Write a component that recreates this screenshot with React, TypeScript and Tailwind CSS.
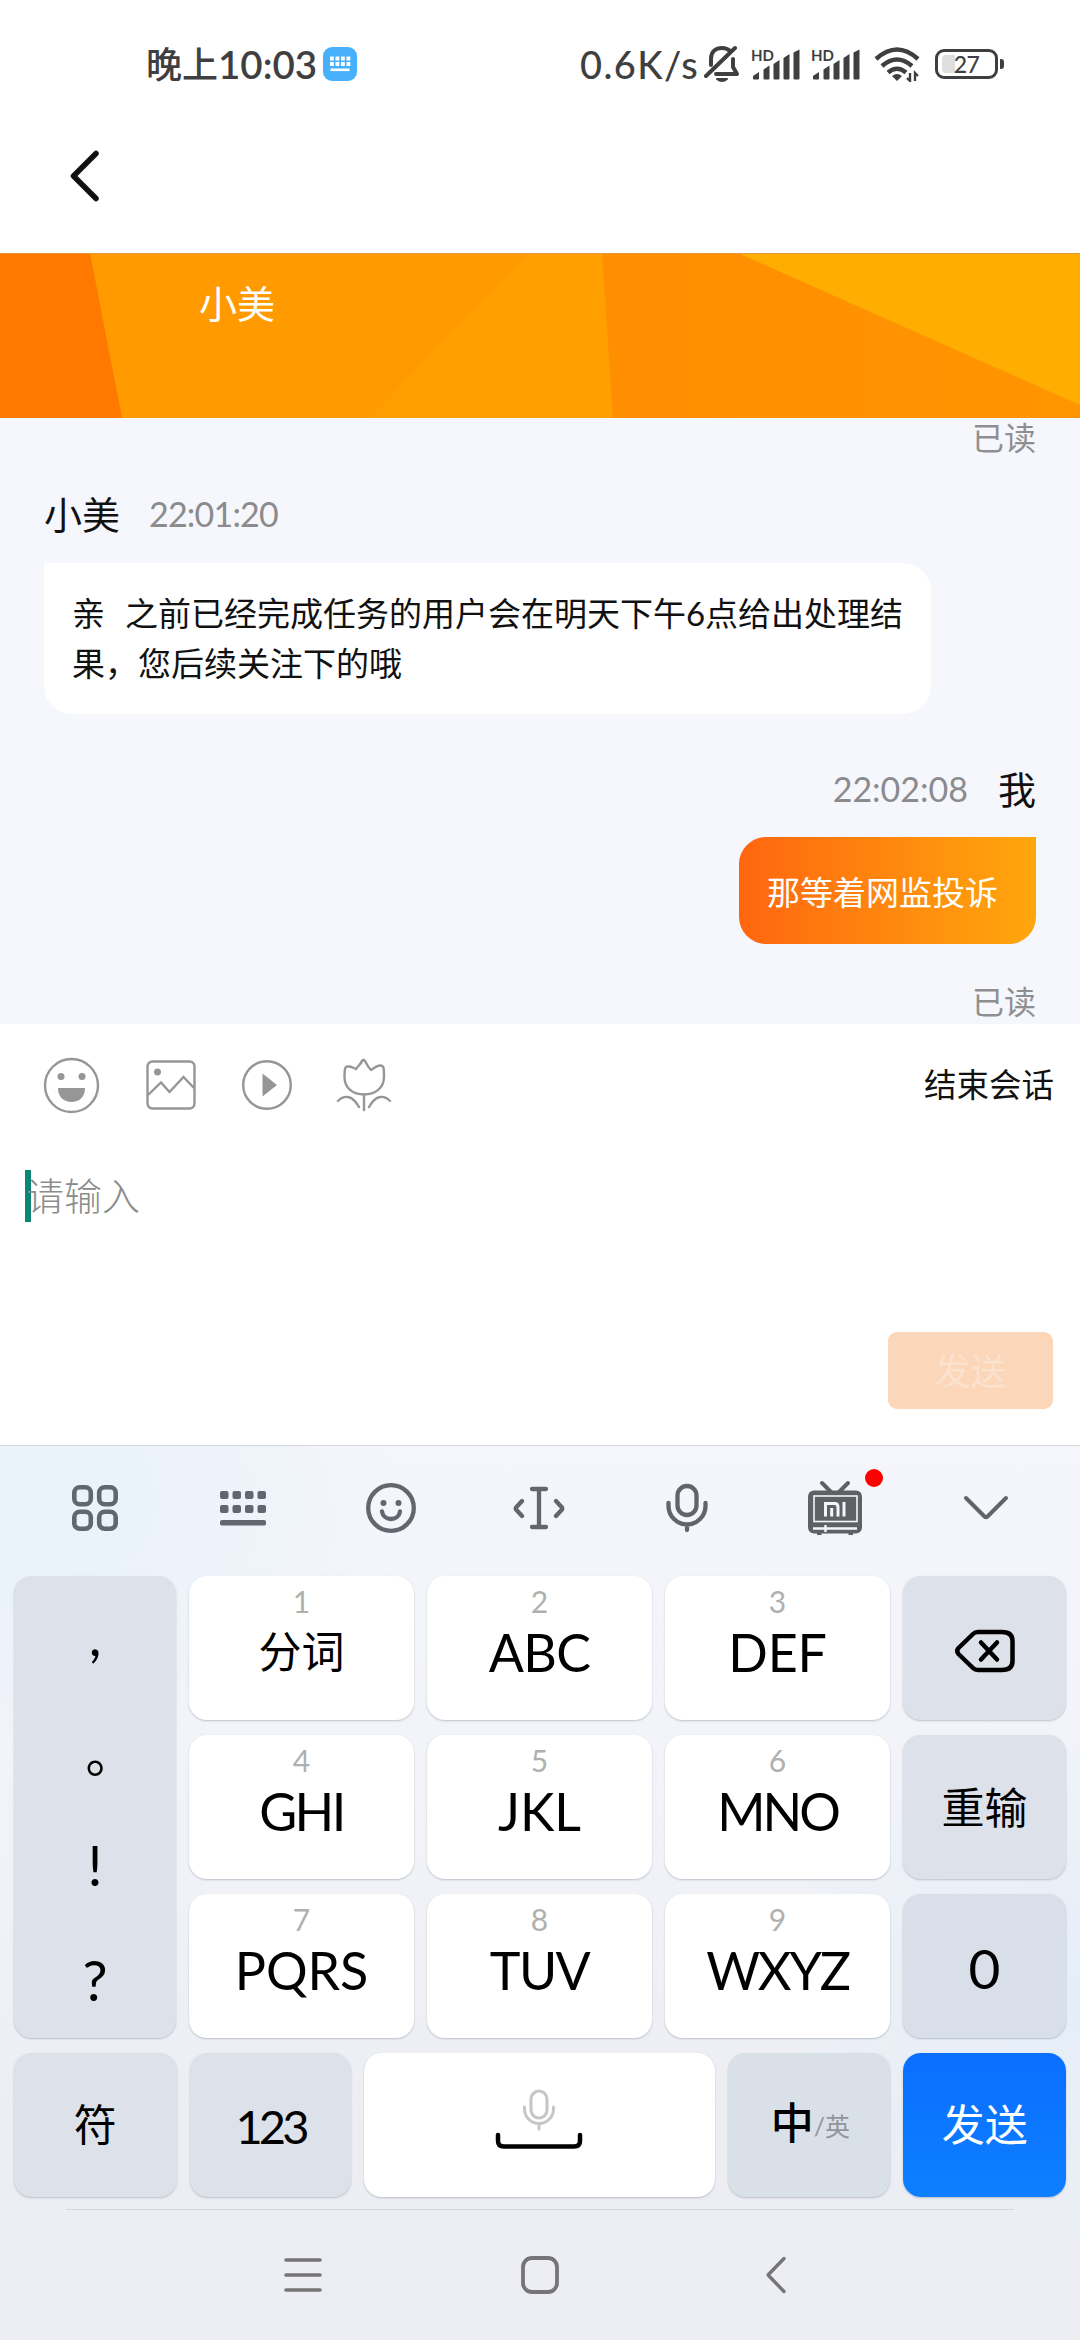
import React from "react";

const font = "font-['Lato','Noto_Sans_CJK_SC',sans-serif]";

function Signal() {
  return (
    <svg className="block overflow-visible" width="50" height="34" viewBox="0 0 50 34" fill="#3f3f41">
      <text x="0" y="14" fontSize="16" fontWeight="700" fontFamily="Lato, sans-serif" textLength="23" lengthAdjust="spacingAndGlyphs">
        HD
      </text>
      <path d="M2 29l6-4v6.500q0 1-1 1H3q-1 0-1-1z" />
      <path d="M12.500 22.500l6-4v13q0 1-1 1h-4q-1 0-1-1z" />
      <path d="M22.500 17l6-4v18.500q0 1-1 1h-4q-1 0-1-1z" />
      <path d="M32.500 11l6-4v24.500q0 1-1 1h-4q-1 0-1-1z" />
      <path d="M42.500 5.500l6-3v29q0 1-1 1h-4q-1 0-1-1z" />
    </svg>
  );
}

function StatusBar() {
  return (
    <div className="flex h-[128px] shrink-0 items-center pl-[146px] text-[#3f3f41]">
      <div className="flex w-[177px] items-center whitespace-nowrap leading-[48px]">
        <span className="text-[36px] font-medium">晚上</span>
        <span className="text-[38.500px] font-semibold">10:03</span>
      </div>
      <svg className="block" width="34" height="34" viewBox="0 0 34 34">
        <rect width="34" height="34" rx="9" fill="#47b0fd" />
        <g fill="#fff">
          {[7, 12.5, 18, 23.500].map((x) => (
            <React.Fragment key={x}>
              <rect x={x} y="9.500" width="3.800" height="4" />
              <rect x={x} y="15" width="3.800" height="4" />
            </React.Fragment>
          ))}
          <rect x="7.500" y="21.500" width="19" height="2.600" />
        </g>
      </svg>
      <span className="ml-[223px] w-[124px] whitespace-nowrap text-[38px] font-medium leading-[48px] tracking-[1.400px]">0.6K/s</span>
      <svg className="block" width="36" height="38" viewBox="0 0 36 38" fill="none" stroke="#3f3f41" strokeWidth="4" strokeLinecap="round" strokeLinejoin="round">
        <path d="M7 20v-6C7 6 12 3 18 3c4 0 6 1 8 3" />
        <path d="M29 14v8l4 7H12" />
        <path d="M2 31L31 3" />
        <path d="M13 34q5 4 10 0z" strokeWidth="2" fill="#3f3f41" />
      </svg>
      <div className="ml-[11px]"><Signal /></div>
      <div className="ml-[10px]"><Signal /></div>
      <svg className="ml-[13px] block" width="48" height="36" viewBox="0 0 48 36" fill="none" stroke="#3f3f41" strokeWidth="4.500">
        <path d="M2 13Q23 -6 44 13" />
        <path d="M8 20Q23 7 38 20" />
        <path d="M14 26.500Q23 19 32 26.500" />
        <path d="M18 30q5-4 10 0l-5 5z" fill="#3f3f41" stroke="none" />
        <path d="M36 27v8l-3-3M41 35v-8l3 3" strokeWidth="2.400" />
      </svg>
      <div className="relative ml-[13px] flex h-[30px] w-[63px] items-center justify-center rounded-[9px] border-[3px] border-[#3f3f41]">
        <span className="absolute left-[4px] top-[3px] h-[18px] w-[13px] rounded-l-[4px] bg-[#dedede]" />
        <span className="relative text-[23px] font-medium leading-[24px] tracking-[-0.5px]">27</span>
      </div>
      <span className="ml-[2px] h-[10px] w-[4px] rounded-r-[3px] bg-[#3f3f41]" />
    </div>
  );
}

function Header() {
  return (
    <div className="h-[125px] shrink-0 pl-[66px] pt-[20px]">
      <svg className="block" width="36" height="56" viewBox="0 0 36 56" fill="none" stroke="#111" strokeWidth="5.500" strokeLinecap="round" strokeLinejoin="round">
        <path d="M30 5.500L7.500 28L30 50.500" />
      </svg>
    </div>
  );
}

function Banner() {
  return (
    <div className="relative h-[165px] shrink-0 overflow-hidden bg-[#ff9b00]">
      <svg className="absolute inset-0 block" width="1080" height="165" viewBox="0 0 1080 165">
        <defs>
          <linearGradient id="facet" x1="0" x2="1">
            <stop offset="0" stopColor="#ff8e00" />
            <stop offset="1" stopColor="#ff9500" />
          </linearGradient>
        </defs>
        <path d="M0 0H90L122 165H0z" fill="#ff7800" />
        <path d="M530 0H602L613 165H370z" fill="#ffa000" />
        <path d="M602 0H738L1080 150V165H613z" fill="url(#facet)" />
        <path d="M738 0H1080V152z" fill="#ffad00" />
        <path d="M0 0H1080V1H0z" fill="#e09a3c" />
      </svg>
      <div className="relative pl-[199px] pt-[25px] text-[38px] leading-[50px] text-white">小美</div>
    </div>
  );
}

function Chat() {
  return (
    <div className="flex h-[606px] shrink-0 flex-col overflow-hidden bg-[#f6f7fc] pl-[44px] pr-[44px] text-[#111]">
      <div className="shrink-0 text-right text-[32px] leading-[40px] text-[#8f8f92]">已读</div>
      <div className="mt-[31px] flex h-[50px] shrink-0 items-center leading-[50px]">
        <span className="text-[38px]">小美</span>
        <span className="ml-[29px] text-[34px] tracking-[-0.8px] text-[#8b8b8e]">22:01:20</span>
      </div>
      <div className="mt-[24px] h-[151px] w-[887px] shrink-0 rounded-[28px] rounded-tl-none bg-white pl-[28px] pt-[25px] text-[33px] leading-[50px]">
        <div className="whitespace-pre">亲<span className="tracking-[1.500px]">{"  "}</span>之前已经完成任务的用户会在明天下午6点给出处理结</div>
        <div>果，您后续关注下的哦</div>
      </div>
      <div className="mt-[50px] flex h-[50px] shrink-0 items-center justify-end leading-[50px]">
        <span className="mr-[30px] text-[34px] text-[#8b8b8e]">22:02:08</span>
        <span className="text-[38px]">我</span>
      </div>
      <div className="mt-[23px] h-[107px] w-[297px] shrink-0 self-end rounded-[27px] rounded-tr-none bg-linear-to-r from-[#ff650f] to-[#ffa60c] pl-[28px] pt-[30px] text-[33px] leading-[50px] text-white">
        那等着网监投诉
      </div>
      <div className="mt-[38px] shrink-0 text-right text-[32px] leading-[40px] text-[#8f8f92]">已读</div>
    </div>
  );
}

function Composer() {
  return (
    <div className="h-[421px] shrink-0 bg-white">
      <div className="flex h-[122px] items-center pl-[43px] pr-[26px]">
        <svg className="block" width="57" height="57" viewBox="0 0 57 57" fill="#969696">
          <circle cx="28.500" cy="28.500" r="26.500" fill="none" stroke="#969696" strokeWidth="2.400" />
          <circle cx="18" cy="19.500" r="3.500" />
          <circle cx="39" cy="19.500" r="3.500" />
          <path d="M15 31H42C42 40 36 45 28.500 45S15 40 15 31z" />
        </svg>
        <svg className="ml-[46px] block" width="50" height="50" viewBox="0 0 50 50" fill="none" stroke="#969696" strokeWidth="2.400">
          <rect x="1.500" y="1.500" width="47" height="47" rx="5" />
          <circle cx="11.500" cy="12" r="3.500" fill="#969696" stroke="none" />
          <path d="M2 35L15 22.500L23.500 32L37.500 17L48 28" />
        </svg>
        <svg className="ml-[46px] block" width="50" height="50" viewBox="0 0 50 50">
          <circle cx="25" cy="25" r="23.800" fill="none" stroke="#969696" strokeWidth="2.400" />
          <path d="M20.500 13.500V36.500L35 25z" fill="#969696" />
        </svg>
        <svg className="ml-[44px] block" width="56" height="56" viewBox="0 0 56 56" fill="none" stroke="#969696" strokeWidth="2.400" strokeLinejoin="round" strokeLinecap="round">
          <path d="M20 12C22 9 25 7 26 4Q27.500 2 29 4C31 8 32 10 35 13C39 10 42 8 45 8.500C48 9 48 12 48 20C48 31 39 37.500 28 37.500S8.500 31 8.500 20C8.500 12 9 9 12 9.500C15 9 17 11 20 12z" />
          <path d="M28 38V53M2 44C9 37 17 39 23 50M33 50C39 39 47 37 54 44" />
        </svg>
        <span className="ml-auto text-[32.500px] leading-[50px] text-[#111]">结束会话</span>
      </div>
      <div className="relative mt-[24px] flex h-[52px] items-center pl-[26px] text-[38px] font-light leading-[52px] text-[#8c8c8c]">
        <span className="absolute left-[25px] top-0 h-[52px] w-[6px] bg-[#0b8574]" />
        <span className="relative -top-px">请输入</span>
      </div>
      <div className="mt-[110px] ml-[888px] flex h-[77px] w-[165px] items-center justify-center rounded-[9px] bg-[#fbd6b9] text-[36px] leading-[50px] text-[#fbe2cf]">
        发送
      </div>
    </div>
  );
}

const keyBase = "flex rounded-[18px] shadow-[0_1px_2px_rgba(90,100,125,0.35)]";
const grayKey = "items-center justify-center bg-[#dde1ea] text-black";

function Cell({ children }: { children: React.ReactNode }) {
  return <div className="relative flex w-[148px] items-center justify-center">{children}</div>;
}

function KeyboardTools() {
  return (
    <div className="flex h-[130px] pb-[6px] pl-[21px]">
      <Cell>
        <svg width="48" height="48" viewBox="0 0 48 48" fill="none" stroke="#62666e" strokeWidth="4.600">
          <rect x="3.300" y="3.300" width="16.500" height="17" rx="5.500" />
          <rect x="28.200" y="3.300" width="16.500" height="17" rx="5.500" />
          <rect x="3.300" y="27.700" width="16.500" height="17" rx="5.500" />
          <rect x="28.200" y="27.700" width="16.500" height="17" rx="5.500" />
        </svg>
      </Cell>
      <Cell>
        <svg width="46" height="36" viewBox="0 0 46 36" fill="#62666e">
          {[0, 12.500, 25, 37.500].map((x) => (
            <React.Fragment key={x}>
              <rect x={x} y="1" width="8.500" height="8" rx="2" />
              <rect x={x} y="15" width="8.500" height="8" rx="2" />
            </React.Fragment>
          ))}
          <rect y="30" width="46" height="5.500" rx="2" />
        </svg>
      </Cell>
      <Cell>
        <svg width="52" height="52" viewBox="0 0 52 52" fill="none" stroke="#62666e" strokeWidth="4.300" strokeLinecap="round">
          <circle cx="26" cy="26" r="22.800" />
          <circle cx="18.500" cy="21" r="3" fill="#62666e" stroke="none" />
          <circle cx="33.500" cy="21" r="3" fill="#62666e" stroke="none" />
          <path d="M17 29.500C18.500 39.500 33.500 39.500 35 29.500" />
        </svg>
      </Cell>
      <Cell>
        <svg width="54" height="46" viewBox="0 0 54 46" fill="none" stroke="#62666e" strokeWidth="4.300" strokeLinecap="round" strokeLinejoin="round">
          <path d="M20 4H34M20 42H34M27 4V42M10 16L4 22.500Q3.500 23.500 4 24.500L10 31M44 16L50 22.500Q50.500 23.500 50 24.500L44 31" />
        </svg>
      </Cell>
      <Cell>
        <svg width="46" height="50" viewBox="0 0 46 50" fill="none" stroke="#626468" strokeWidth="4.300" strokeLinecap="round">
          <rect x="13.500" y="3" width="19" height="29" rx="9.500" />
          <path d="M4.500 20V23A18.500 18.500 0 0 0 41.500 23V20M23 42V47" />
        </svg>
      </Cell>
      <Cell>
        <svg width="54" height="56" viewBox="0 0 54 56">
          <path d="M14 3L23 12M40 3L31 12" stroke="#5f6164" strokeWidth="4" strokeLinecap="round" />
          <path d="M9 50h4.500v5H9zM40.500 50H45v5h-4.500z" fill="#5f6164" />
          <rect x="0" y="10.500" width="54" height="43" rx="6" fill="#5f6164" />
          <rect x="6" y="16" width="43" height="25.500" fill="none" stroke="#f4f6fb" strokeWidth="1.600" />
          <path d="M5 48.500H49M17.500 45V52" stroke="#f4f6fb" strokeWidth="2.400" />
          <path d="M17.500 36.500V23.500H26.500Q30 23.500 30 27V36.500M23.700 28V36.500M36 22V36.500" fill="none" stroke="#f4f6fb" strokeWidth="3" />
        </svg>
        <span className="absolute left-[104px] top-[23px] h-[18px] w-[18px] rounded-full bg-[#fe0000]" />
      </Cell>
      <Cell>
        <svg className="ml-[6px]" width="48" height="28" viewBox="0 0 48 28" fill="none" stroke="#626468" strokeWidth="4" strokeLinecap="round" strokeLinejoin="round">
          <path d="M4 4L22.500 22.500Q24 24 25.500 22.500L44 4" />
        </svg>
      </Cell>
    </div>
  );
}

const letterClass: Record<string, string> = {
  "1": "mt-[6px] text-[43px] leading-[60px]",
  "2": "mt-[6px] text-[52px] leading-[60px] tracking-[-0.7px]",
  "3": "mt-[6px] text-[52px] leading-[60px] tracking-[-0.2px]",
  "4": "mt-[6px] text-[52px] leading-[60px] tracking-[-2.500px]",
  "5": "mt-[6px] text-[52px] leading-[60px]",
  "6": "mt-[6px] text-[52px] leading-[60px] tracking-[-3px]",
  "7": "mt-[6px] text-[52px] leading-[60px]",
  "8": "mt-[6px] text-[52px] leading-[60px] tracking-[-1.500px]",
  "9": "mt-[6px] text-[52px] leading-[60px] tracking-[-2.200px]",
};

function LetterKey({ n, label }: { n: string; label: string }) {
  return (
    <div className={`${keyBase} h-[144px] w-[225px] flex-col items-center bg-white text-black`}>
      <span className="mt-[10px] text-[30px] leading-[30px] text-[#b0b0b0]">{n}</span>
      <span className={letterClass[n]}>{label}</span>
    </div>
  );
}

const letterRows = [
  [["1", "分词"], ["2", "ABC"], ["3", "DEF"]],
  [["4", "GHI"], ["5", "JKL"], ["6", "MNO"]],
  [["7", "PQRS"], ["8", "TUV"], ["9", "WXYZ"]],
];

function Keys() {
  return (
    <div className="flex flex-col gap-[15px] px-[14px]">
      <div className="flex gap-[13px]">
        <div className={`${keyBase} ${grayKey} h-[462px] w-[163px] flex-col text-[56px]`}>
          <span className="flex h-[115px] items-center leading-[60px]">,</span>
          <span className="relative top-[15px] flex h-[115px] items-center font-['Noto_Sans_CJK_TC',sans-serif] text-[50px] leading-[60px]">。</span>
          <span className="flex h-[115px] items-center leading-[60px]">!</span>
          <span className="flex h-[115px] items-center leading-[60px]">?</span>
        </div>
        <div className="flex flex-col gap-[15px]">
          {letterRows.map((row) => (
            <div key={row[0][0]} className="flex gap-[13px]">
              {row.map(([n, label]) => (
                <LetterKey key={n} n={n} label={label} />
              ))}
            </div>
          ))}
        </div>
        <div className="flex flex-col gap-[15px]">
          <div className={`${keyBase} ${grayKey} h-[144px] w-[163px] pt-[5px]`}>
            <svg width="62" height="44" viewBox="0 0 62 44" fill="none" stroke="#000" strokeWidth="4.500" strokeLinecap="round" strokeLinejoin="round">
              <path d="M24 3H48Q58.500 3 58.500 12V32Q58.500 41 48 41H24Q21 41 19 39L4.500 25Q2 22 4.500 19L19 5Q21 3 24 3z" />
              <path d="M27 13.500L43 30.500M43 13.500L27 30.500" />
            </svg>
          </div>
          <div className={`${keyBase} ${grayKey} h-[144px] w-[163px] pt-[2px] text-[43px]`}>重输</div>
          <div className={`${keyBase} h-[144px] w-[163px] items-center justify-center bg-[#d9dfe8] pt-[4px] text-[55px] text-black`}>
            <span>0</span>
          </div>
        </div>
      </div>
      <div className="flex gap-[13px]">
        <div className={`${keyBase} ${grayKey} h-[144px] w-[163px] text-[43px]`}>符</div>
        <div className={`${keyBase} ${grayKey} h-[144px] w-[162px] pt-[2px] text-[47px] tracking-[-4px]`}>123</div>
        <div className={`${keyBase} h-[144px] w-[351px] flex-col items-center bg-white pt-[36px]`}>
          <svg width="34" height="42" viewBox="0 0 34 42" fill="none" stroke="#c6c6c6" strokeWidth="3" strokeLinecap="round">
            <rect x="9" y="2" width="16" height="27" rx="8" />
            <path d="M2.500 18V20A14.500 14.500 0 0 0 31.500 20V18M17 35V40" />
          </svg>
          <svg width="88" height="20" viewBox="0 0 88 20" fill="none" stroke="#000" strokeWidth="4.500" strokeLinecap="round">
            <path d="M3 4V10Q3 15.500 9 15.500H79Q85 15.500 85 10V4" />
          </svg>
        </div>
        <div className={`${keyBase} h-[144px] w-[163px] items-center justify-center bg-[#dae0e8] pb-[4px] pl-[3px] text-[43px] text-black`}>
          <span className="font-medium">中</span>
          <span className="relative top-[4px] text-[25px] text-[#92969b]">/英</span>
        </div>
        <div className={`${keyBase} h-[144px] w-[163px] items-center justify-center bg-linear-to-b from-[#0b6eff] to-[#0e7fff] text-[43px] text-white`}>发送</div>
      </div>
    </div>
  );
}

function NavBar() {
  return (
    <div className="mx-[66px] mt-[12px] flex h-[131px] items-start justify-center border-t border-[#d5d8df] pt-[45px]">
      <svg className="block" width="40" height="40" viewBox="0 0 40 40" stroke="#757578" strokeWidth="3.600" strokeLinecap="round">
        <path d="M3 5H37M3 20H37M3 35H37" />
      </svg>
      <svg className="ml-[197px] block" width="40" height="40" viewBox="0 0 40 40" fill="none" stroke="#757578" strokeWidth="3.800">
        <rect x="3" y="3" width="34" height="34" rx="9" />
      </svg>
      <svg className="ml-[197px] block" width="40" height="40" viewBox="0 0 40 40" fill="none" stroke="#757578" strokeWidth="3.400" strokeLinecap="round" strokeLinejoin="round">
        <path d="M27 3.500L11.500 19.500Q11 20 11.500 20.500L27 36.500" />
      </svg>
    </div>
  );
}

export default function App() {
  return (
    <div lang="zh-CN" className={`flex h-[2340px] w-[1080px] flex-col overflow-hidden bg-white ${font}`}>
      <StatusBar />
      <Header />
      <Banner />
      <Chat />
      <Composer />
      <div className="h-[895px] border-t border-[#d5d9dc] bg-[#edeef3] bg-[radial-gradient(ellipse_340px_300px_at_100%_62%,#e5eef8_0%,transparent_100%),radial-gradient(ellipse_400px_260px_at_0%_6%,#eaf2fa_30%,transparent_100%),linear-gradient(180deg,#f4f6fb_0%,#f2f3f8_45%,#edeef3_75%)]">
        <KeyboardTools />
        <Keys />
        <NavBar />
      </div>
    </div>
  );
}
